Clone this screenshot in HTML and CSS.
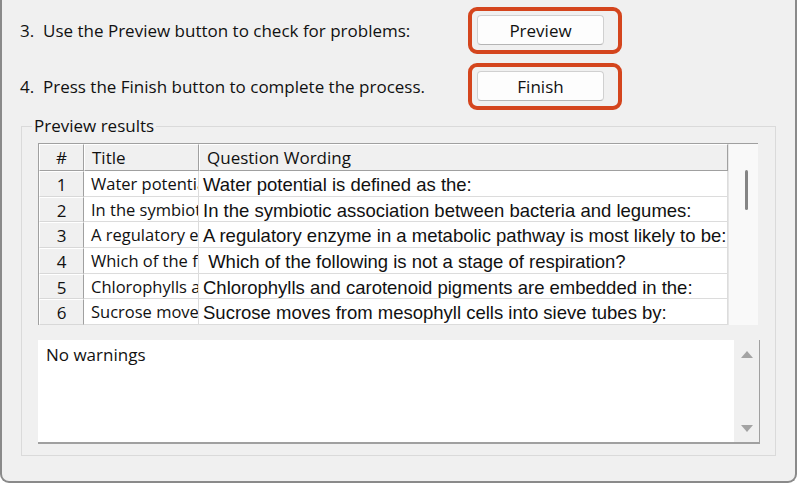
FILE: index.html
```html
<!DOCTYPE html>
<html lang="en">
<head>
    <meta charset="UTF-8">
    <title>Question Import - Preview</title>
    <link rel="stylesheet" href="styles.css">
</head>
<body>
    <div class="window">
        <div class="steps">
            <div class="step-text">3.&nbsp; Use the Preview button to check for problems:</div>
            <div class="highlight"><button class="btn">Preview</button></div>
            <div class="step-text">4.&nbsp; Press the Finish button to complete the process.</div>
            <div class="highlight"><button class="btn">Finish</button></div>
        </div>

        <fieldset class="group">
            <legend>Preview results</legend>

            <div class="grid-wrap">
                <div class="grid">
                    <div class="hcell num">#</div>
                    <div class="hcell">Title</div>
                    <div class="hcell">Question Wording</div>

                    <div class="rcell">1</div>
                    <div class="cell title">Water potential is defined as the:</div>
                    <div class="cell">Water potential is defined as the:</div>

                    <div class="rcell">2</div>
                    <div class="cell title">In the symbiotic association between bacteria and legumes:</div>
                    <div class="cell">In the symbiotic association between bacteria and legumes:</div>

                    <div class="rcell">3</div>
                    <div class="cell title">A regulatory enzyme in a metabolic pathway is most likely to be:</div>
                    <div class="cell">A regulatory enzyme in a metabolic pathway is most likely to be:</div>

                    <div class="rcell">4</div>
                    <div class="cell title">Which of the following is not a stage of respiration?</div>
                    <div class="cell">&nbsp;Which of the following is not a stage of respiration?</div>

                    <div class="rcell">5</div>
                    <div class="cell title">Chlorophylls and carotenoid pigments are embedded in the:</div>
                    <div class="cell">Chlorophylls and carotenoid pigments are embedded in the:</div>

                    <div class="rcell">6</div>
                    <div class="cell title">Sucrose moves from mesophyll cells into sieve tubes by:</div>
                    <div class="cell">Sucrose moves from mesophyll cells into sieve tubes by:</div>
                </div>
                <div class="vscroll">
                    <div class="thumb"></div>
                </div>
            </div>

            <div class="warnings">
                <div class="warn-text">No warnings</div>
                <div class="warn-scroll">
                    <span class="arrow up"></span>
                    <span class="arrow down"></span>
                </div>
            </div>
        </fieldset>
    </div>
</body>
</html>
```

FILE: styles.css
```css
body {
    margin: 0;
    background: #ffffff;
    font-family: "Open Sans", "Noto Sans", sans-serif;
    color: #111;
}
.window {
    width: 797px;
    height: 483px;
    box-sizing: border-box;
    background: #f0f0f0;
    border-left: 2px solid #8a8a8a;
    border-right: 2px solid #8a8a8a;
    border-bottom: 2px solid #8a8a8a;
    border-radius: 0 0 9px 9px;
    overflow: hidden;
}
.steps {
    display: grid;
    grid-template-columns: 448px auto;
    row-gap: 9px;
    align-items: center;
    padding: 7px 0 0 18px;
}
.step-text {
    font-size: 17px;
}
.highlight {
    width: 137px;
    box-sizing: content-box;
    border: 4px solid #d4451d;
    border-radius: 9px;
    padding: 4px 4px 5px 5px;
}
.btn {
    display: block;
    width: 127px;
    height: 30px;
    padding: 0;
    background: #fdfdfd;
    border: 1px solid #d0d0d0;
    border-bottom-color: #b5b5b5;
    border-radius: 4px;
    font-family: "Open Sans", "Noto Sans", sans-serif;
    font-size: 17px;
    color: #111;
}
.group {
    margin: 6px 0 0 19px;
    width: 755px;
    box-sizing: border-box;
    height: 340px;
    border: 1px solid #dadada;
    padding: 7px 15px 0 0;
}
.group legend {
    margin-left: 10px;
    padding: 0 2px;
    font-size: 17px;
    line-height: 20px;
}
.grid-wrap {
    display: flex;
    margin-left: 16px;
    height: 182px;
    border-top: 1px solid #a0a0a0;
    border-left: 1px solid #a0a0a0;
    width: 720px;
    box-sizing: border-box;
}
.grid {
    display: grid;
    grid-template-columns: 45px 115px 529px;
    grid-template-rows: 27px repeat(6, 25.7px);
    overflow: hidden;
}
.hcell {
    background: #f0f0f0;
    border-top: 1px solid #ffffff;
    border-left: 1px solid #ffffff;
    border-right: 1px solid #a0a0a0;
    border-bottom: 1px solid #a0a0a0;
    padding-left: 7px;
    font-size: 17px;
    line-height: 25px;
    white-space: nowrap;
}
.hcell.num {
    padding-left: 0;
    text-align: center;
}
.rcell {
    background: #f0f0f0;
    border-top: 1px solid #ffffff;
    border-left: 1px solid #ffffff;
    border-right: 1px solid #a0a0a0;
    border-bottom: 1px solid #d8d8d8;
    text-align: center;
    font-size: 17px;
    line-height: 26px;
    overflow: hidden;
}
.cell {
    background: #ffffff;
    border-right: 1px solid #dcdcdc;
    border-bottom: 1px solid #dcdcdc;
    padding-left: 4px;
    font-family: "Liberation Sans", Arial, sans-serif;
    font-size: 18.5px;
    line-height: 27px;
    white-space: nowrap;
    overflow: hidden;
}
.cell.title {
    padding-left: 7px;
    font-family: "Open Sans", "Noto Sans", sans-serif;
    font-size: 16.5px;
    line-height: 26px;
}
.vscroll {
    flex: 1;
    background: #f9f9f9;
    border-left: 1px solid #e6e6e6;
    position: relative;
}
.thumb {
    position: absolute;
    left: 16px;
    top: 26px;
    width: 3px;
    height: 40px;
    border-radius: 2px;
    background: #858585;
}
.warnings {
    display: flex;
    margin: 15px 0 0 16px;
    width: 722px;
    height: 104px;
    box-sizing: border-box;
    background: #ffffff;
    border-right: 1px solid #a0a0a0;
    border-bottom: 2px solid #a0a0a0;
}
.warn-text {
    flex: 1;
    padding: 3px 0 0 8px;
    font-size: 17px;
}
.warn-scroll {
    width: 25px;
    background: #f0f0f0;
    display: flex;
    flex-direction: column;
    justify-content: space-between;
    align-items: center;
    padding: 11px 0 10px;
}
.arrow {
    width: 0;
    height: 0;
    border-left: 6px solid transparent;
    border-right: 6px solid transparent;
}
.arrow.up {
    border-bottom: 7px solid #a3a3a3;
}
.arrow.down {
    border-top: 7px solid #a3a3a3;
}
```
